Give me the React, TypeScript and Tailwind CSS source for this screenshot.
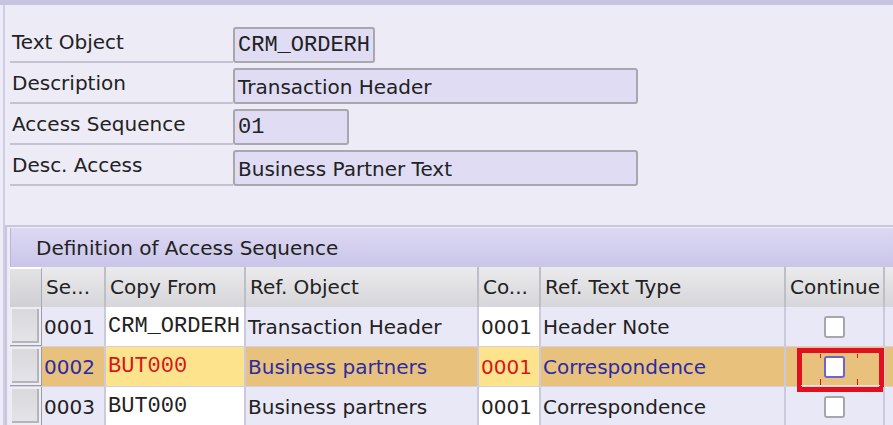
import React from "react";

type Cell = {
  text: string;
  mono?: boolean;
  input?: boolean;
  color?: string;
};

type RowData = {
  cells: Cell[];
  selected?: boolean;
};

const cols = [64, 140, 233, 62, 245];

const headers = ["Se...", "Copy From", "Ref. Object", "Co...", "Ref. Text Type"];

const rows: RowData[] = [
  {
    cells: [
      { text: "0001" },
      { text: "CRM_ORDERH", mono: true, input: true },
      { text: "Transaction Header" },
      { text: "0001", input: true },
      { text: "Header Note" },
    ],
  },
  {
    selected: true,
    cells: [
      { text: "0002", color: "text-[#2b2ba6]" },
      { text: "BUT000", mono: true, input: true, color: "text-[#d8141c]" },
      { text: "Business partners", color: "text-[#2b2ba6]" },
      { text: "0001", input: true, color: "text-[#d8141c]" },
      { text: "Correspondence", color: "text-[#2b2ba6]" },
    ],
  },
  {
    cells: [
      { text: "0003" },
      { text: "BUT000", mono: true, input: true },
      { text: "Business partners" },
      { text: "0001", input: true },
      { text: "Correspondence" },
    ],
  },
];

const fields = [
  { label: "Text Object", value: "CRM_ORDERH", width: "w-[142px]", mono: true },
  { label: "Description", value: "Transaction Header", width: "w-[405px]" },
  { label: "Access Sequence", value: "01", width: "w-[116px]", mono: true },
  { label: "Desc. Access", value: "Business Partner Text", width: "w-[405px]" },
];

const sans = "font-['DejaVu_Sans',sans-serif]";
const mono = "font-['Liberation_Mono',monospace]";

const App = () => {
  return (
    <div
      className={`h-[425px] w-[893px] overflow-hidden border-t-[5px] border-[#c7c4e2] bg-[#ecebf6] text-[20px] text-[#222] ${sans}`}
    >
      <div className="ml-[3px] h-full border-l-2 border-[#cfcce6]">
        {/* header fields */}
        <div className="pl-[5px] pt-[17px]">
          {fields.map((f) => (
            <div key={f.label} className="flex h-[41px]">
              <div className="flex h-full w-[223px] items-center border-b-2 border-[#c3c1d3] pl-[2px] pt-[1px] leading-none">
                {f.label}
              </div>
              <div
                className={`mt-[5px] flex h-[36px] items-center rounded-[3px] border-2 border-[#a9a7ad] bg-[#dfdcf4] px-[3px] pt-[2px] leading-none ${f.width} ${f.mono ? `${mono} text-[22px]` : ""}`}
              >
                {f.value}
              </div>
            </div>
          ))}
        </div>

        {/* table group */}
        <div className="mt-[39px] border-l-2 border-t-2 border-[#c8c5e2] pl-[3px] pt-[1px]">
          <div className="flex h-[39px] items-center border-l border-[#b9b5da] bg-gradient-to-b from-[#dcd9f2] to-[#cac5e9] pl-[25px] leading-none">
            Definition of Access Sequence
          </div>

          {/* column headers */}
          <div className="flex h-[40px]">
            <div className="w-[32px] shrink-0 border-r border-t-2 border-[#a9a9b2] border-t-white bg-gradient-to-b from-[#e2e2e4] to-[#d0d0d4]" />
            {headers.map((h, i) => (
              <div
                key={h}
                style={{ width: cols[i] }}
                className="flex shrink-0 items-center border-r-2 border-[#bebec6] bg-gradient-to-b from-[#ebebed] to-[#d6d6da] pl-[4px] leading-none"
              >
                {h}
              </div>
            ))}
            <div className="flex w-[99px] shrink-0 items-center border-r-2 border-[#bebec6] bg-gradient-to-b from-[#ebebed] to-[#d6d6da] pl-[4px] leading-none">
              Continue
            </div>
            <div className="flex-1 bg-gradient-to-b from-[#ebebed] to-[#d6d6da]" />
          </div>

          {/* data rows */}
          {rows.map((r, ri) => (
            <div
              key={ri}
              className={`flex h-[40px] border-b border-[#d2d0e2] ${r.selected ? "bg-[#e8c27c]" : "bg-[#e9e8f6]"}`}
            >
              <div className="w-[32px] shrink-0 border-b border-r border-[#9c9ca6] bg-[#ededf2] p-[2px]">
                <div className="h-full w-full border-b-2 border-r-2 border-[#b4b4bc] bg-gradient-to-b from-[#d8d8dd] to-[#e3e3e8]" />
              </div>
              {r.cells.map((c, ci) => (
                <div
                  key={ci}
                  style={{ width: cols[ci] }}
                  className={`flex shrink-0 items-center overflow-hidden whitespace-nowrap border-r-2 border-[#cbc9dc] leading-none ${
                    c.input ? (r.selected ? "bg-[#fde48c]" : "bg-white") : ""
                  } ${c.mono ? `${mono} pl-[2px] text-[22px]` : "pl-[2px]"} ${c.color ?? ""}`}
                >
                  {c.text}
                </div>
              ))}
              <div className="relative flex w-[99px] shrink-0 items-center justify-center border-r-2 border-[#cbc9dc]">
                <div
                  className={`h-[22px] w-[21px] rounded-[3px] border-2 bg-white ${r.selected ? "border-[#6c62d4]" : "border-[#a7a7ab]"}`}
                />
                {r.selected && (
                  <div className="absolute left-[11px] top-[1px] h-[44px] w-[87px] border-[5px] border-[#e1101f]">
                    <div className="absolute left-[18px] top-[1px] h-[4px] w-px bg-[#e1101f]" />
                    <div className="absolute left-[55px] top-[1px] h-[4px] w-px bg-[#e1101f]" />
                    <div className="absolute bottom-[1px] left-[18px] h-[7px] w-px bg-[#e1101f]" />
                    <div className="absolute bottom-[1px] left-[55px] h-[7px] w-px bg-[#e1101f]" />
                    <div className="absolute bottom-[1px] left-[-1px] h-px w-[79px] bg-[#f3e8cf]" />
                  </div>
                )}
              </div>
              <div className="flex-1" />
            </div>
          ))}
        </div>
      </div>
    </div>
  );
};

export default App;
